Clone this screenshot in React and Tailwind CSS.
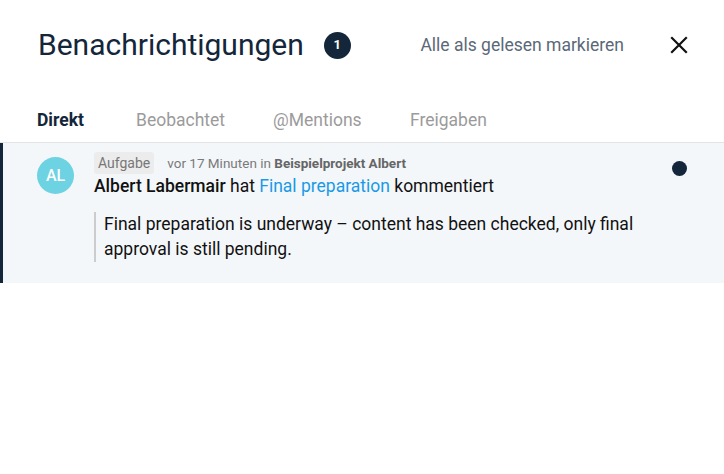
import React from 'react';

const tabs = ['Direkt', 'Beobachtet', '@Mentions', 'Freigaben'];

export default function App() {
  return (
    <div className="w-[724px] h-[474px] bg-white overflow-hidden" style={{ fontFamily: 'Roboto, "Liberation Sans", sans-serif' }}>
      {/* Header */}
      <div className="h-[90px] flex items-center pl-[38px] pr-[36px]">
        <h1 className="text-[30px] leading-none text-[#14263a] font-normal">Benachrichtigungen</h1>
        <span className="ml-[20px] w-[27px] h-[27px] rounded-full bg-[#14263a] text-white text-[13px] font-bold flex items-center justify-center">1</span>
        <button className="ml-auto text-[17.5px] text-[#5b6878]">Alle als gelesen markieren</button>
        <button className="ml-[46px] w-[18px] h-[18px] flex items-center justify-center">
          <svg width="18" height="18" viewBox="0 0 18 18" fill="none" stroke="#111" strokeWidth="2.2" strokeLinecap="square">
            <path d="M2 2 L16 16 M16 2 L2 16" />
          </svg>
        </button>
      </div>

      {/* Tabs */}
      <div className="h-[53px] flex items-start pt-[19px] pl-[37px] border-b border-[#e2e4e6]">
        {tabs.map((t, i) => (
          <div
            key={t}
            className={`text-[17.5px] leading-[22px] ${i === 0 ? 'font-bold text-[#14263a] w-[99px]' : 'text-[#9b9b9b] w-[137px]'}`}
          >
            {t}
          </div>
        ))}
      </div>

      {/* Notification */}
      <div className="flex bg-[#f4f7fa] border-l-[3px] border-[#14263a] pl-[34px] pr-[37px] pt-[9px] pb-[21px]">
        <div className="mt-[5px] w-[37px] h-[37px] shrink-0 rounded-full bg-[#6dd2e1] text-white text-[16px] font-medium flex items-center justify-center">
          AL
        </div>
        <div className="flex-1 ml-[20px]">
          <div className="h-[22px] flex items-center">
            <span className="h-[22px] px-[4px] flex items-center bg-[#ececec] text-[#777] text-[14px] rounded-[3px]">Aufgabe</span>
            <span className="ml-[13px] text-[13.5px] text-[#7a7a7a]">vor 17 Minuten in <span className="font-bold text-[#666]">Beispielprojekt Albert</span></span>
          </div>
          <div className="text-[17.5px] leading-[24px] text-[#111]">
            <span className="font-medium">Albert Labermair</span> hat{' '}
            <span className="text-[#1a9ae6]">Final preparation</span> kommentiert
          </div>
          <div className="mt-[14px] border-l-2 border-[#cccccc] pl-[8px] text-[17.5px] leading-[25px] text-[#111]">
            Final preparation is underway – content has been checked, only final approval is still pending.
          </div>
        </div>
        <div className="mt-[9px] ml-[10px] w-[15px] h-[15px] shrink-0 rounded-full bg-[#14263a]" />
      </div>
    </div>
  );
}
